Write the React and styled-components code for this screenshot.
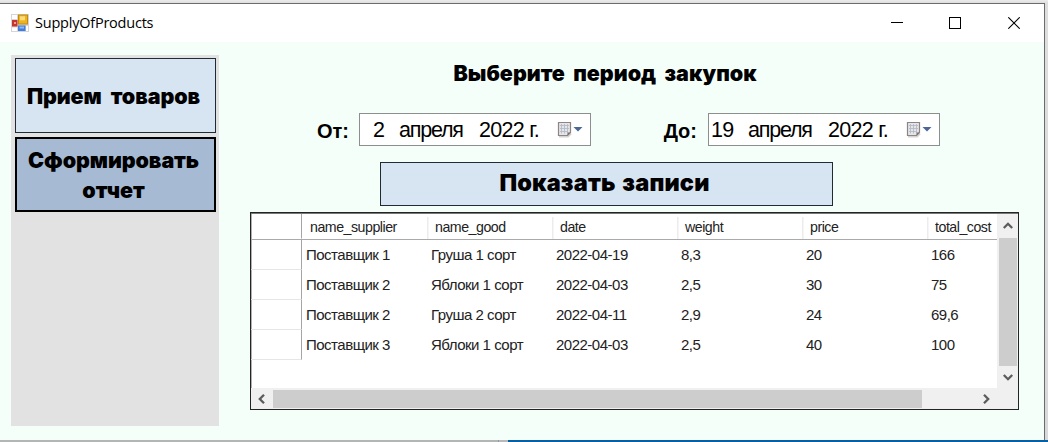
import React from "react";
import styled, { createGlobalStyle } from "styled-components";

const GlobalStyle = createGlobalStyle`
  * { box-sizing: border-box; }
  html, body { margin: 0; padding: 0; }
  body {
    width: 1048px;
    height: 442px;
    overflow: hidden;
    background: #dcdcde;
    font-family: "Liberation Sans", sans-serif;
    color: #000;
  }
`;

const Desktop = styled.div`
  width: 1048px;
  height: 442px;
  padding-top: 3px;
  display: flex;
  flex-direction: column;
  background: linear-gradient(#ececec, #dedede 3px, #d9d9dc);
`;

const Window = styled.div`
  width: 1045px;
  height: 437px;
  display: flex;
  flex-direction: column;
  border-top: 1px solid #6c6c6c;
  border-right: 1px solid #6c6c6c;
  background: #f5fffa;
`;

const Taskbar = styled.div`
  height: 2px;
  display: flex;
  background: #b9b9bb;
  &::before { content: ""; width: 498px; background: #b4b5b5; border-right: 1px solid #98989c; }
  &::after { content: ""; margin-left: 9px; flex: 1; background: #0560a5; }
`;

const TitleBar = styled.header`
  height: 38px;
  flex: none;
  display: flex;
  align-items: center;
  padding-left: 11px;
  background: #fff;
`;

const Title = styled.span`
  flex: 1;
  margin-left: 6px;
  font: 14.5px/20px "Open Sans", sans-serif;
  letter-spacing: -0.22px;
`;

const WindowButton = styled.button`
  width: ${(p) => p.$width || 58}px;
  height: 38px;
  padding: 0;
  border: 0;
  background: none;
  display: flex;
  align-items: center;
  justify-content: center;
`;

const Body = styled.div`
  flex: 1;
  display: flex;
  padding: 13px 25px 0 11px;
`;

const Sidebar = styled.nav`
  width: 208px;
  height: 371px;
  padding: 3px 2px 0 4px;
  display: flex;
  flex-direction: column;
  gap: 4px;
  background: #e2e2e2;
`;

const HeavyButton = styled.button`
  display: flex;
  align-items: center;
  justify-content: center;
  padding: 0;
  border: 1px solid #222a33;
  background: #d7e4f2;
  color: #000;
  font: 900 23.5px/30px "Inter", sans-serif;
  letter-spacing: 0.15px;
  word-spacing: 2px;
`;

const NavButton = styled(HeavyButton)`
  height: 75px;
  width: 201px;
  padding-right: 4px;
  font-size: 21.5px;
  letter-spacing: -0.1px;
  word-spacing: 5px;
  ${(p) => p.$active && `
    border: 2px solid #000;
    background: #a6bbd3;
  `}
`;

const Content = styled.main`
  margin-left: 31px;
  width: 769px;
  display: flex;
  flex-direction: column;
`;

const Heading = styled.h1`
  margin: 4px 0 0;
  padding-right: 59px;
  height: 28px;
  text-align: center;
  font: 900 21.5px/29px "Inter", sans-serif;
  letter-spacing: 0;
  word-spacing: 4px;
`;

const Period = styled.div`
  display: flex;
  margin-top: 26px;
  height: 33px;
`;

const PeriodLabel = styled.label`
  width: ${(p) => p.$width}px;
  padding-right: ${(p) => p.$gap}px;
  text-align: right;
  font-size: 20px;
  font-weight: 700;
  line-height: 36px;
`;

const DateField = styled.div`
  width: 232px;
  display: flex;
  align-items: center;
  border: 1px solid #8b8f8d;
  background: #fff;
  font-size: 21.5px;
  letter-spacing: -0.7px;
  line-height: 31px;
  white-space: nowrap;
`;

const Day = styled.span`
  width: 39px;
  padding: 2px 0 0 ${(p) => (p.$wide ? 2 : 13)}px;
`;
const Month = styled.span`
  width: 80px;
  padding-top: 2px;
  letter-spacing: -1.2px;
`;
const Year = styled.span`
  width: 78px;
  padding-top: 2px;
`;

const ShowButton = styled(HeavyButton)`
  width: 453px;
  height: 44px;
  margin: 16px 0 0 130px;
  padding: 0 4px 2px 0;
`;

const Grid = styled.section`
  margin-top: 6px;
  width: 769px;
  height: 198px;
  border: 1px solid #222523;
  box-shadow: inset 0 1px #777;
  display: grid;
  grid-template-columns: 746px 21px;
  grid-template-rows: 175px 21px;
  background: #f0f0f0;
`;

const Table = styled.div`
  overflow: hidden;
  background: #fff;
  box-shadow: inset 0 1px #777, inset 1px 0 #b0b0b0;
`;

const Row = styled.div`
  display: flex;
  height: 30px;
  font-size: 15px;
  letter-spacing: -0.5px;
  line-height: 30px;
  color: #222;
  white-space: nowrap;
`;

const HeaderRow = styled(Row)`
  height: 27px;
  padding-top: 1px;
  border-bottom: 1px solid #aaa;
  line-height: 26px;
`;

const RowHeader = styled.div`
  flex: none;
  width: 51px;
  border-right: 1px solid #a5a5a5;
  border-bottom: 1px solid ${(p) => (p.$head ? "transparent" : "#e6e6e6")};
`;

const Cell = styled.div`
  flex: none;
  width: 125px;
  padding-left: 4px;
`;

const HeaderCell = styled(Cell)`
  padding-left: 8px;
  & + & {
    background: linear-gradient(#ececec, #ececec) 0 3px / 1.5px 100% no-repeat;
  }
`;

const ColumnName = styled.span`
  display: inline-block;
  transform: scaleX(0.945);
  transform-origin: left;
`;

const VerticalScroll = styled.div`
  display: flex;
  flex-direction: column;
  align-items: center;
  padding-top: 1px;
`;

const VerticalThumb = styled.div`
  flex: none;
  width: 18px;
  height: 128px;
  background: #cdcdcd;
`;

const HorizontalScroll = styled.div`
  grid-column: 1 / 3;
  display: flex;
  align-items: center;
`;

const HorizontalThumb = styled.div`
  flex: none;
  width: 649px;
  height: 18px;
  background: #cdcdcd;
`;

const ArrowBox = styled.div`
  width: ${(p) => p.$w}px;
  height: ${(p) => p.$h}px;
  flex: none;
  display: flex;
  align-items: center;
  justify-content: center;
`;

const rotation = { up: 0, right: 90, down: 180, left: 270 };

function Arrow({ dir, w, h }) {
  return (
    <ArrowBox $w={w} $h={h}>
      <svg width="12" height="12" viewBox="0 0 12 12">
        <path
          d="M1.8 8 L6 3.8 L10.2 8"
          fill="none"
          stroke="#5c5c5c"
          strokeWidth="2.3"
          transform={`rotate(${rotation[dir]} 6 6)`}
        />
      </svg>
    </ArrowBox>
  );
}

function FormIcon() {
  return (
    <svg width="18" height="18" viewBox="0 0 18 18">
      <rect width="18" height="18" fill="#d5d5d5" />
      <rect x="1" y="1" width="5" height="4" fill="#fff" />
      <rect x="1" y="13.5" width="5" height="3.5" fill="#fff" />
      <rect x="15" y="12" width="2" height="5" fill="#fff" />
      <rect x="1" y="6" width="5.5" height="6.5" fill="#c5352c" />
      <rect x="3" y="8" width="2" height="2" fill="#f39a8c" />
      <rect x="7.5" y="1" width="9" height="9" fill="#eeb31f" stroke="#c48a10" />
      <rect x="9" y="2.3" width="5" height="4" fill="#fbdc7c" />
      <rect x="7" y="11.5" width="7.5" height="5.5" fill="#3f7de0" />
      <rect x="8.5" y="12.5" width="4.5" height="2" fill="#8fb8f5" />
    </svg>
  );
}

function CalendarIcon() {
  return (
    <svg width="26" height="17" viewBox="0 0 26 17">
      <path d="M2 15.5 H11 L14 12.5" fill="none" stroke="#d5d2d2" strokeWidth="2" />
      <path d="M1.5 1.5 H13.5 V11.5 L10.5 14.5 H1.5 Z" fill="#e4e6ea" stroke="#8e8482" strokeWidth="1.2" />
      <path d="M3 4.5 H12 M3 7.5 H12 M3 10.5 H11 M4.5 3 V12.5 M7.5 3 V12.5 M10.5 3 V12" stroke="#b4bac6" strokeWidth="0.9" />
      <path d="M10.5 14.5 V11.5 H13.5 Z" fill="#77706f" />
      <path d="M16.5 6 H25.5 L21 10.5 Z" fill="#4c6795" />
    </svg>
  );
}

function DatePicker({ day }) {
  return (
    <DateField>
      <Day $wide={day.length > 1}>{day}</Day>
      <Month>апреля</Month>
      <Year>2022 г.</Year>
      <CalendarIcon />
    </DateField>
  );
}

const columns = ["name_supplier", "name_good", "date", "weight", "price", "total_cost"];
const rows = [
  ["Поставщик 1", "Груша 1 сорт", "2022-04-19", "8,3", "20", "166"],
  ["Поставщик 2", "Яблоки 1 сорт", "2022-04-03", "2,5", "30", "75"],
  ["Поставщик 2", "Груша 2 сорт", "2022-04-11", "2,9", "24", "69,6"],
  ["Поставщик 3", "Яблоки 1 сорт", "2022-04-03", "2,5", "40", "100"],
];

export default function App() {
  return (
    <Desktop>
      <GlobalStyle />
      <Window>
        <TitleBar>
          <FormIcon />
          <Title>SupplyOfProducts</Title>
          <WindowButton aria-label="Minimize">
            <svg width="12" height="12"><path d="M0 5.5 H12" stroke="#000" /></svg>
          </WindowButton>
          <WindowButton aria-label="Maximize">
            <svg width="12" height="12"><rect x="0.5" y="0.5" width="11" height="11" fill="none" stroke="#000" /></svg>
          </WindowButton>
          <WindowButton $width={60} aria-label="Close">
            <svg width="12" height="12"><path d="M0.3 0.3 L11.7 11.7 M11.7 0.3 L0.3 11.7" stroke="#000" strokeWidth="1.1" /></svg>
          </WindowButton>
        </TitleBar>
        <Body>
          <Sidebar>
            <NavButton>Прием товаров</NavButton>
            <NavButton $active>Сформировать<br />отчет</NavButton>
          </Sidebar>
          <Content>
            <Heading>Выберите период закупок</Heading>
            <Period>
              <PeriodLabel $width={109} $gap={10}>От:</PeriodLabel>
              <DatePicker day="2" />
              <PeriodLabel $width={117} $gap={11}>До:</PeriodLabel>
              <DatePicker day="19" />
            </Period>
            <ShowButton>Показать записи</ShowButton>
            <Grid>
              <Table>
                <HeaderRow>
                  <RowHeader $head />
                  {columns.map((name) => (
                    <HeaderCell key={name}><ColumnName>{name}</ColumnName></HeaderCell>
                  ))}
                </HeaderRow>
                {rows.map((row, i) => (
                  <Row key={i}>
                    <RowHeader />
                    {row.map((value, j) => <Cell key={j}>{value}</Cell>)}
                  </Row>
                ))}
              </Table>
              <VerticalScroll>
                <Arrow dir="up" w={18} h={24} />
                <VerticalThumb />
                <Arrow dir="down" w={18} h={22} />
              </VerticalScroll>
              <HorizontalScroll>
                <Arrow dir="left" w={22} h={18} />
                <HorizontalThumb />
                <Arrow dir="right" w={128} h={18} />
              </HorizontalScroll>
            </Grid>
          </Content>
        </Body>
      </Window>
      <Taskbar />
    </Desktop>
  );
}
